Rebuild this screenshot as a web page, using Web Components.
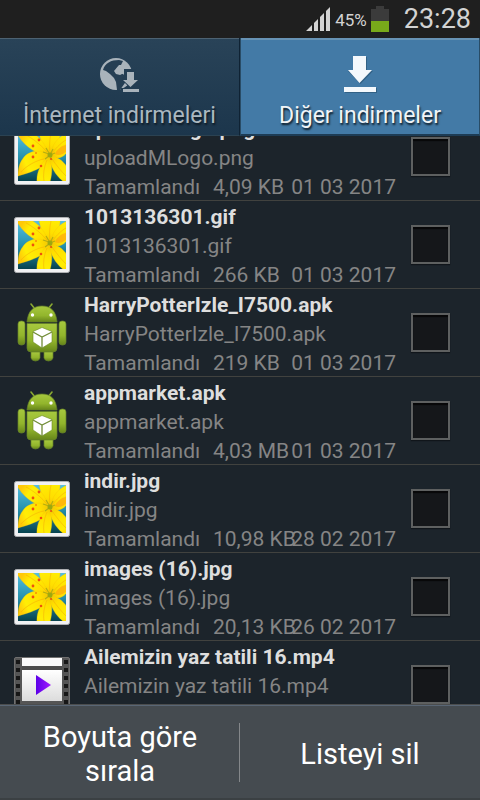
<!DOCTYPE html>
<html lang="tr">
<head>
<meta charset="utf-8">
<meta name="viewport" content="width=device-width, initial-scale=1">
<title>İndirmeler</title>
<style>
html, body { height: 100%; margin: 0; background: #1c242b; font-family: Roboto, "Noto Sans", sans-serif; }
</style>
</head>
<body>
<downloads-app></downloads-app>

<template id="status-tpl">
<style>
:host { display: flex; justify-content: flex-end; align-items: center; gap: 4px; height: 38px; padding: 0 9px 0 0; background: #1f1f1f; color: #d3d3d3; }
svg { display: block; }
.pct { font-size: 17px; line-height: 24px; padding-top: 2px; }
.time { font-size: 27px; line-height: 38px; margin-left: 11px; }
</style>
<svg width="25" height="24" viewBox="0 0 25 24" fill="#d3d3d3"><path d="M0 24L6 18V24zM8 16L12 12V24H8zM14 10L18 6V24H14zM20 4L24 0V24H20z"/></svg>
<span class="pct">45%</span>
<svg width="18" height="26" viewBox="0 0 18 26"><path d="M0 3H5V0H13V3H18V15H0z" fill="#3b3b3b"/><path d="M0 15H18V26H0z" fill="#78a91a"/></svg>
<span class="time">23:28</span>
</template>

<template id="tab-tpl">
<style>
:host { display: block; flex: 1; min-width: 0; }
button { box-sizing: border-box; display: flex; flex-direction: column; align-items: center; width: 100%; height: 98px; margin: 0; padding: 14px 0 0; border: solid #0f2233; border-width: 0 1px 0 0; border-bottom: 1px solid #2b4252; background: linear-gradient(#294358, #1c364c); box-shadow: inset 0 1px #4d6272; color: #abb8c0; font: 23px/28px Roboto, "Noto Sans", sans-serif; text-shadow: 1px 2px 2px #0c1822; }
:host([selected]) button { border-right: 1px solid #294c66; border-left: 1px solid #294c66; border-bottom: 2px solid #1d3c55; background: #437aa6; box-shadow: inset 0 2px #6793b5; color: #f0f4f7; }
.icon { display: block; height: 50px; }
</style>
<button type="button" role="tab"><span class="icon"><slot name="icon"></slot></span><slot></slot></button>
</template>

<template id="row-tpl">
<style>
:host { box-sizing: border-box; display: grid; grid-template-columns: 56px minmax(0, 1fr) 39px; align-items: center; min-height: 88px; padding: 0 30px 0 14px; border-bottom: 1px solid #41423f; color: #858585; font-size: 21px; line-height: 29px; }
.text { padding: 2px 15px 0 14px; margin-bottom: -2px; white-space: nowrap; }
.name { display: block; color: #dedede; font-weight: 700; }
.file { display: block; }
.meta { display: flex; }
.state { flex: 0 0 129px; }
.size { flex: 1 1 0; width: 0; }
svg { display: block; }
input { appearance: none; box-sizing: border-box; width: 39px; height: 39px; margin: 0; border: 2px solid #5e6060; background: #15171a; box-shadow: inset 0 2px 1px #070708, 0 1px 1px #10151a; }
input:checked { background: #437aa6; }
</style>
<span class="icon"></span>
<label class="text" for="pick"><span class="name"></span><span class="file"></span><span class="meta"><span class="state">Tamamlandı</span><span class="size"></span><span class="date"></span></span></label>
<input type="checkbox" id="pick">
</template>

<template id="image-icon">
<svg width="56" height="56" viewBox="0 0 56 56">
<defs><linearGradient id="b" x2="0" y2="1"><stop stop-color="#55bfe2"/><stop offset=".5" stop-color="#2792ae"/><stop offset="1" stop-color="#07434f"/></linearGradient>
<radialGradient id="y" gradientUnits="userSpaceOnUse" cx="36" cy="26" r="34"><stop stop-color="#f1c405"/><stop offset=".3" stop-color="#ffdf00"/><stop offset=".75" stop-color="#ffee05"/><stop offset="1" stop-color="#ffc808"/></radialGradient>
<clipPath id="c"><path d="M4 4H52V52H4z"/></clipPath></defs>
<rect x=".5" y=".5" width="55" height="55" rx="2" fill="#f1f1f3" stroke="#aeb0b3"/>
<path d="M4 4H52V52H4z" fill="url(#b)"/>
<g clip-path="url(#c)">
<g fill="url(#y)" stroke="#f7c203" stroke-width=".3">
<path d="M35 27C28 16 26 10 25 2H46C47 12 40 22 35 27z"/>
<path d="M36 27C38 15 44 8 53 4V23C49 30 42 30 36 27z"/>
<path d="M35 27C24 25 12 20 3 5L5 3H17C27 8 33 18 35 27z"/>
<path d="M35 26C30 21 17 20 10 28C6 33 4 38 4 47C14 44 21 42 27 38C32 35 34 31 35 26z"/>
<path d="M35 26C27 34 22 44 23 53H36C39 42 38 34 35 26z"/>
<path d="M35 26C36 38 42 47 50 53H54V39C48 30 41 27 35 26z"/>
</g>
<path d="M41 25C44 18 49 17 53 15V22C48 26 45 27 41 25z" fill="#ff9d10" opacity=".6"/>
<g fill="none" stroke="#f5a808" stroke-width="1" opacity=".5"><path d="M36 24C35 15 36 9 37 4M38 24C43 18 48 13 52 11M33 23C26 15 18 9 12 6M30 30C23 31 12 37 7 43M33 31C30 38 29 45 30 52M38 30C43 37 47 42 52 47"/></g>
</g>
<path d="M35 24L32 19M35 25L29 23M36 26L39 20M36 26L41 24M36 27L38 31M35 27L31 30" stroke="#b5ad11" stroke-width="1.2"/>
<circle cx="36" cy="26" r="2.500" fill="#9da80f"/>
<g fill="#f0500d"><circle cx="19" cy="17" r="1.400"/><circle cx="25" cy="11" r="1.400"/><circle cx="19" cy="28" r="1.400"/><circle cx="27" cy="37" r="1.300"/><circle cx="37" cy="30" r="1"/><circle cx="22" cy="24" r=".8"/></g>
</svg>
</template>

<template id="apk-icon">
<svg width="56" height="60" viewBox="0 0 56 60">
<defs><linearGradient id="g" x2="0" y2="1"><stop stop-color="#a7c83e"/><stop offset=".6" stop-color="#92b52c"/><stop offset="1" stop-color="#66851a"/></linearGradient></defs>
<path d="M21 6L17 1M34 6L38 1" stroke="#8aa932" stroke-width="1.6" stroke-linecap="round"/>
<g fill="url(#g)" stroke="#66822a" stroke-width=".7">
<path d="M13 19C14 8 19 3 28 3S42 8 43 19z"/>
<path d="M13 20.500H43V45Q43 49 39 49H17Q13 49 13 45z"/>
<rect x="4" y="18" width="7" height="24" rx="3"/><rect x="45" y="18" width="7" height="24" rx="3"/>
<path d="M17 49H26V55Q25 58 21.500 58T17 55zM30 49H39V55Q38 58 34.500 58T30 55z"/></g>
<circle cx="18.500" cy="12" r="1.700" fill="#fff"/><circle cx="37" cy="12" r="1.700" fill="#fff"/>
<path d="M28 24.500L38 28.500V39L28 45L19 39V28.500z" fill="#fff" stroke="#6c8c20" stroke-width=".6"/>
<path d="M19 29L28 34L38 29M28 34V45" fill="none" stroke="#728d37" stroke-width="1.300"/>
</svg>
</template>

<template id="video-icon">
<svg width="56" height="56" viewBox="0 0 56 56">
<defs><linearGradient id="v" x2="0" y2="1"><stop stop-color="#fff"/><stop offset="1" stop-color="#dcdcdc"/></linearGradient><linearGradient id="p" x2="1"><stop stop-color="#5b00e8"/><stop offset="1" stop-color="#a21cff"/></linearGradient></defs>
<rect x=".5" y=".5" width="55" height="55" rx="1.500" fill="#555" stroke="#707070"/>
<path d="M8 1H48V9H8z" fill="#fafafa"/><path d="M8 9H48V13H8z" fill="#4c4c4c"/><path d="M8 13H48V44H8z" fill="url(#v)"/><path d="M8 47H48V55H8z" fill="#eee"/>
<path d="M4 3V56M52 3V56" stroke="#171717" stroke-width="4" stroke-dasharray="4 4"/>
<path d="M22 18L37 28L22 38z" fill="url(#p)"/>
</svg>
</template>

<template id="bar-tpl">
<style>
:host { box-sizing: border-box; display: flex; align-items: center; min-height: 96px; border-top: 1px solid #4b4d4e; background: #454b50; box-shadow: inset 0 1px #596675, inset 0 -2px #3b4043; }
button { flex: 1 1 0; min-width: 0; margin: 0; padding: 2px 36px 0; border: 0; background: none; color: #fff; font: 29px/34px Roboto, "Noto Sans", sans-serif; }
button + button { border-left: 1px solid transparent; }
i { width: 1px; height: 59px; margin-left: -1px; background: #84878a; }
</style>
<button type="button">Boyuta göre sırala</button><i></i><button type="button">Listeyi sil</button>
</template>

<template id="app-tpl">
<style>
:host { display: flex; flex-direction: column; height: 100vh; }
nav { display: flex; }
main { flex: 1; min-height: 0; overflow-y: auto; scrollbar-width: none; background: #1c242b; }
svg { display: block; }
</style>
<status-bar></status-bar>
<nav role="tablist">
<download-tab><svg slot="icon" width="42" height="40" viewBox="0 0 42 40"><circle cx="17" cy="22" r="16" fill="#a9b3bb"/><path d="M4 18C6 11 12 8 20 8L24 9L22 13L18 16L16 19L18 22L22 21L27 24L28 28L21 38H18L17 30L15 26L11 22L7 19z" fill="#263f54"/><path d="M15 19L20 13L25 13L27 20L21 23L17 22z" fill="#a9b3bb"/><path d="M25 17H37V25H41L32 37L23 28V25H25z" fill="#243e53"/><path d="M28 20H35V28H39L31.500 35L24 28H28z" fill="#a9b3bb"/><path d="M22 36H41V40H22z" fill="#243e53"/><path d="M24 37H40V40H24z" fill="#a9b3bb"/></svg>İnternet indirmeleri</download-tab>
<download-tab selected><svg slot="icon" width="34" height="42" viewBox="0 0 34 42"><path d="M11 5H24V19H30L17.500 32L5 19H11zM2 36H34V41H2z" fill="#28506f" opacity=".6"/><path d="M10 4H23V18H29L16.500 31L5 18H10zM1 35H33V40H1z" fill="#f4f8fc"/></svg>Diğer indirmeler</download-tab>
</nav>
<main>
<download-row kind="image" name="uploadMLogo.png" size="4,09 KB" date="01 03 2017"></download-row>
<download-row kind="image" name="1013136301.gif" size="266 KB" date="01 03 2017"></download-row>
<download-row kind="apk" name="HarryPotterIzle_I7500.apk" size="219 KB" date="01 03 2017"></download-row>
<download-row kind="apk" name="appmarket.apk" size="4,03 MB" date="01 03 2017"></download-row>
<download-row kind="image" name="indir.jpg" size="10,98 KB" date="28 02 2017"></download-row>
<download-row kind="image" name="images (16).jpg" size="20,13 KB" date="26 02 2017"></download-row>
<download-row kind="video" name="Ailemizin yaz tatili 16.mp4" size="" date=""></download-row>
</main>
<action-bar></action-bar>
</template>

<script>
const stamp = (host, id) => {
  const root = host.attachShadow({ mode: "open" });
  root.append(document.getElementById(id).content.cloneNode(true));
  return root;
};
customElements.define("status-bar", class extends HTMLElement {
  constructor() { super(); stamp(this, "status-tpl"); }
});
customElements.define("action-bar", class extends HTMLElement {
  constructor() { super(); stamp(this, "bar-tpl"); }
});
customElements.define("download-tab", class extends HTMLElement {
  constructor() { super(); stamp(this, "tab-tpl"); }
  connectedCallback() {
    this.shadowRoot.querySelector("button").setAttribute("aria-selected", this.hasAttribute("selected"));
  }
});
customElements.define("download-row", class extends HTMLElement {
  constructor() { super(); stamp(this, "row-tpl"); }
  connectedCallback() {
    const find = s => this.shadowRoot.querySelector(s);
    const name = this.getAttribute("name");
    find(".name").textContent = name;
    find(".file").textContent = name;
    find(".size").textContent = this.getAttribute("size");
    find(".date").textContent = this.getAttribute("date");
    find(".icon").replaceChildren(document.getElementById(this.getAttribute("kind") + "-icon").content.cloneNode(true));
  }
});
customElements.define("downloads-app", class extends HTMLElement {
  constructor() { super(); stamp(this, "app-tpl"); }
  connectedCallback() {
    this.shadowRoot.querySelector("main").scrollTop = 23;
  }
});
</script>
</body>
</html>
